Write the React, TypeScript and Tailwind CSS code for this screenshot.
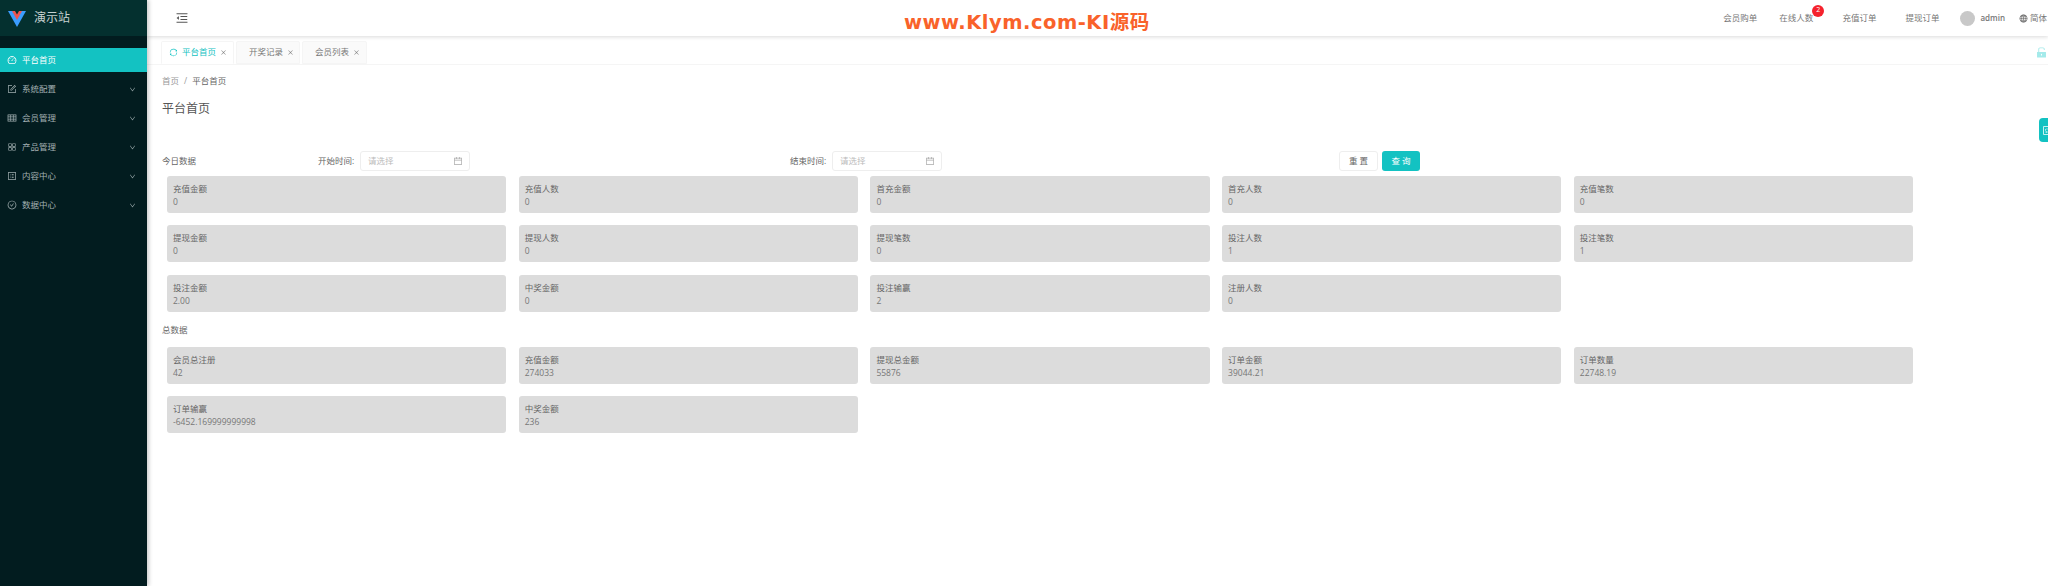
import {
  AiOutlineDashboard,
  AiOutlineForm,
  AiOutlineTable,
  AiOutlineAppstore,
  AiOutlineProfile,
  AiOutlineCheckCircle,
  AiOutlineDown,
  AiOutlineMenuFold,
  AiOutlineClose,
  AiOutlineSync,
  AiOutlineCalendar,
  AiOutlineGlobal,
  AiFillUnlock,
  AiOutlineInteraction,
} from "react-icons/ai"

const menu = [
  { label: "系统配置", icon: AiOutlineForm },
  { label: "会员管理", icon: AiOutlineTable },
  { label: "产品管理", icon: AiOutlineAppstore },
  { label: "内容中心", icon: AiOutlineProfile },
  { label: "数据中心", icon: AiOutlineCheckCircle },
]

const today = [
  ["充值金额", "0"],
  ["充值人数", "0"],
  ["首充金额", "0"],
  ["首充人数", "0"],
  ["充值笔数", "0"],
  ["提现金额", "0"],
  ["提现人数", "0"],
  ["提现笔数", "0"],
  ["投注人数", "1"],
  ["投注笔数", "1"],
  ["投注金额", "2.00"],
  ["中奖金额", "0"],
  ["投注输赢", "2"],
  ["注册人数", "0"],
]

const total = [
  ["会员总注册", "42"],
  ["充值金额", "274033"],
  ["提现总金额", "55876"],
  ["订单金额", "39044.21"],
  ["订单数量", "22748.19"],
  ["订单输赢", "-6452.169999999998"],
  ["中奖金额", "236"],
]

function CardGrid({ items }: { items: string[][] }) {
  return (
    <div className="grid grid-cols-5 gap-x-[12.5px] gap-y-[12.3px] w-[1746px] ml-[5px]">
      {items.map(([label, value]) => (
        <div key={label} className="h-[37px] bg-[#dcdcdc] rounded-[3px] pl-[6px] pt-[6px] text-[8.5px] leading-[13px] text-[#666]">
          <div>{label}</div>
          <div className="text-[#777]">{value}</div>
        </div>
      ))}
    </div>
  )
}

function DateField({ label, className }: { label: string; className: string }) {
  return (
    <div className={`flex items-center ${className}`}>
      <span className="text-[8.5px] text-[#666] w-[42px]">{label}:</span>
      <div className="w-[110px] h-[20px] border border-[#eee] rounded-[3px] bg-white flex items-center justify-between pl-[7px] pr-[6px]">
        <span className="text-[8.5px] text-[#bbb]">请选择</span>
        <AiOutlineCalendar className="text-[#aaa] text-[10px]" />
      </div>
    </div>
  )
}

export default function App() {
  return (
    <div className="h-[586px] flex bg-white overflow-hidden relative font-['Open_Sans','Noto_Sans_CJK_SC',sans-serif]">

      {/* SIDEBAR */}
      <aside className="w-[147px] shrink-0 bg-[#021c1f] shadow-[2px_0_4px_rgba(0,0,0,0.2)] z-20">
        <div className="h-[36px] bg-[#04302f] flex items-center pl-[8px]">
          <svg width="18" height="17" viewBox="0 0 18 17">
            <path d="M0 1h18L9 17z" fill="#3b9dff" />
            <path d="M4 1h10L9 10z" fill="#ef5350" />
            <path d="M7 1h4L9 4.5z" fill="#04302f" />
          </svg>
          <span className="ml-[8px] text-[12px] text-[#c5d0d0]">演示站</span>
        </div>

        <div className="pt-[12px] flex flex-col gap-[5px]">
          <div className="h-[24px] bg-[#13c2c2] flex items-center pl-[7px] text-white">
            <AiOutlineDashboard className="text-[10px]" />
            <span className="ml-[5px] text-[8.5px]">平台首页</span>
          </div>
          {menu.map(item => (
            <div key={item.label} className="h-[24px] flex items-center pl-[7px] pr-[11px] text-[#a3b0b2]">
              <item.icon className="text-[10px]" />
              <span className="ml-[5px] text-[8.5px]">{item.label}</span>
              <AiOutlineDown className="ml-auto text-[7px]" />
            </div>
          ))}
        </div>
      </aside>

      {/* MAIN */}
      <div className="flex-1 min-w-0 flex flex-col">

        {/* HEADER */}
        <header className="h-[36px] shrink-0 bg-white shadow-[0_1px_4px_rgba(0,0,0,0.15)] flex items-center relative z-10 pl-[28px] text-[8.5px] text-[#777]">
          <AiOutlineMenuFold className="text-[14px] text-[#555]" />
          <span className="ml-[715px] mt-[10px] text-[#f9622a] text-[19.5px] font-bold tracking-[0.5px] leading-none font-['DejaVu_Sans','Noto_Sans_CJK_SC',sans-serif]">www.Klym.com-KI源码</span>

          <div className="ml-auto flex items-center">
            <span>会员购单</span>
            <span className="ml-[22px] relative">
              在线人数
              <span className="absolute left-[33px] top-[-7px] w-[12px] h-[12px] rounded-full bg-[#f5222d] text-white text-[7px] flex items-center justify-center">2</span>
            </span>
            <span className="ml-[29px]">充值订单</span>
            <span className="ml-[29px]">提现订单</span>
            <span className="ml-[21px] w-[15px] h-[15px] rounded-full bg-[#c8c8c8]"></span>
            <span className="ml-[5px] font-semibold text-[8px]">admin</span>
            <AiOutlineGlobal className="ml-[14px] text-[9px] text-[#555]" />
            <span className="ml-[2px] mr-[1px]">简体</span>
          </div>
        </header>

        {/* TABS */}
        <div className="mt-[5px] h-[24px] shrink-0 border-b border-[#f5f5f5] flex items-end pl-[14px] gap-[2px] relative text-[8.5px] text-[#777]">
          <div className="w-[73px] h-[23px] border border-[#f5f5f5] border-b-white bg-white rounded-t-[2px] flex items-center pl-[7px] text-[#13c2c2]">
            <AiOutlineSync className="text-[9px]" />
            <span className="ml-[4px]">平台首页</span>
            <AiOutlineClose className="ml-[4px] text-[7px] text-[#888]" />
          </div>
          <div className="w-[64px] h-[23px] border border-[#f5f5f5] bg-[#fafafa] rounded-t-[2px] flex items-center pl-[12px]">
            <span>开奖记录</span>
            <AiOutlineClose className="ml-[4px] text-[7px] text-[#888]" />
          </div>
          <div className="w-[65px] h-[23px] border border-[#f5f5f5] bg-[#fafafa] rounded-t-[2px] flex items-center pl-[12px]">
            <span>会员列表</span>
            <AiOutlineClose className="ml-[4px] text-[7px] text-[#888]" />
          </div>
          <AiFillUnlock className="absolute right-[0px] top-[5px] text-[13px] text-[#a4eaea]" />
        </div>

        {/* CONTENT */}
        <div className="pl-[15px]">
          <div className="mt-[10px] h-[12px] flex items-center text-[8.5px] text-[#999]">
            首页
            <span className="mx-[5px]">/</span>
            <span className="text-[#666]">平台首页</span>
          </div>
          <h1 className="mt-[13px] h-[18px] leading-[18px] text-[12px] font-normal text-[#555]">平台首页</h1>

          {/* FILTER */}
          <div className="mt-[33px] h-[20px] flex items-center text-[8.5px] text-[#666]">
            <span className="w-[156px]">今日数据</span>
            <DateField label="开始时间" className="" />
            <DateField label="结束时间" className="ml-[320px]" />
            <button className="ml-[397px] w-[39px] h-[20px] border border-[#eee] rounded-[3px] bg-white text-[8.5px] text-[#666]">重 置</button>
            <button className="ml-[4px] w-[38px] h-[20px] rounded-[3px] bg-[#13c2c2] text-[8.5px] text-white">查 询</button>
          </div>

          <div className="mt-[5px]">
            <CardGrid items={today} />
          </div>

          <div className="mt-[12px] h-[12px] leading-[12px] text-[8.5px] text-[#666]">总数据</div>

          <div className="mt-[11px]">
            <CardGrid items={total} />
          </div>
        </div>
      </div>

      {/* FLOATING SETTINGS */}
      <div className="absolute right-0 top-[118px] w-[9px] h-[24px] bg-[#13c2c2] rounded-l-[4px] overflow-hidden flex items-center pl-[3px]">
        <AiOutlineInteraction className="text-white text-[11px] shrink-0" />
      </div>
    </div>
  )
}
